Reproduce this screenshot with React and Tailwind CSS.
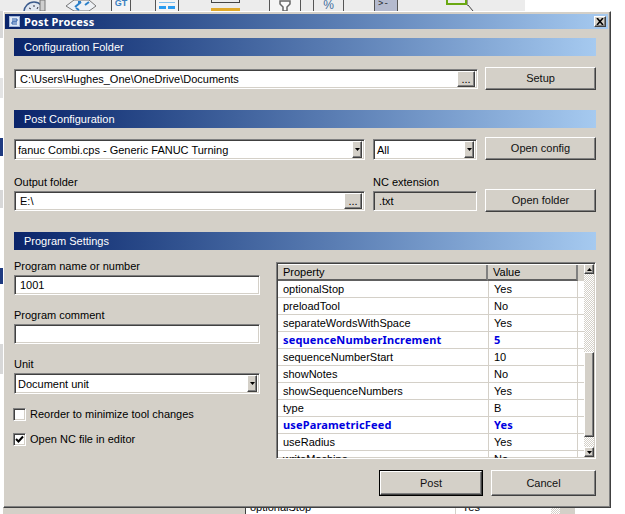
import React from "react";

const font = "font-['Liberation_Sans','Noto_Sans',sans-serif] text-[11px] leading-[14px]";
const boldFont = "font-['Noto_Sans',sans-serif] font-bold tracking-[0.15px]";

const sunken =
  "border border-t-[#808080] border-l-[#808080] border-b-white border-r-white shadow-[inset_1px_1px_0_#404040,inset_-1px_-1px_0_#d4d0c8]";
const raised =
  "border border-t-white border-l-white border-b-[#404040] border-r-[#404040] shadow-[inset_-1px_-1px_0_#808080]";
const gradient = "bg-gradient-to-r from-[#0a246a] to-[#a6caf0]";
const dither = "bg-[repeating-conic-gradient(#d4d0c8_0_25%,#ffffff_0_50%)] bg-[length:2px_2px]";

const rows = [
  ["optionalStop", "Yes"],
  ["preloadTool", "No"],
  ["separateWordsWithSpace", "Yes"],
  ["sequenceNumberIncrement", "5", true],
  ["sequenceNumberStart", "10"],
  ["showNotes", "No"],
  ["showSequenceNumbers", "Yes"],
  ["type", "B"],
  ["useParametricFeed", "Yes", true],
  ["useRadius", "Yes"],
  ["writeMachine", "No"],
];

const Arrow = ({ up }) => (
  <svg width="5" height="3" viewBox="0 0 5 3" className="block">
    <path d={up ? "M2.5 0 L5 3 L0 3 Z" : "M0 0 L5 0 L2.5 3 Z"} fill="#000" />
  </svg>
);

const Bar = ({ children, className = "" }) => (
  <div className={`h-[18px] flex items-center pl-[10px] text-white ${gradient} ${className}`}>
    {children}
  </div>
);

const Button = ({ children, className = "" }) => (
  <div className={`flex items-center justify-center bg-[#d4d0c8] pb-px text-[#111] ${raised} ${className}`}>
    {children}
  </div>
);

const Field = ({ children, className = "", bg = "bg-white" }) => (
  <div className={`flex items-center h-[20px] pl-[5px] text-black ${bg} ${sunken} ${className}`}>
    {children}
  </div>
);

const Browse = ({ children }) => (
  <Field className="justify-between pr-[2px]">
    <span>{children}</span>
    <div className={`w-[18px] h-[16px] flex items-center justify-center leading-[10px] bg-[#d4d0c8] ${raised}`}>...</div>
  </Field>
);

const Combo = ({ children, className = "" }) => (
  <div className={`flex items-center justify-between h-[21px] pl-[3px] pr-[2px] bg-white text-black ${sunken} ${className}`}>
    <span>{children}</span>
    <div className={`w-[10px] h-[17px] flex items-center justify-center bg-[#d4d0c8] ${raised}`}>
      <Arrow />
    </div>
  </div>
);

const Check = ({ checked, label, className = "" }) => (
  <div className={`flex items-center gap-[4px] -ml-px ${className}`}>
    <div className={`w-[13px] h-[13px] flex items-center justify-center bg-white ${sunken}`}>
      {checked && (
        <svg width="9" height="9" viewBox="0 0 9 9">
          <path d="M1 4 L3.5 6.5 L8 1.5" fill="none" stroke="#000" strokeWidth="2" />
        </svg>
      )}
    </div>
    <span className="text-black">{label}</span>
  </div>
);

function Toolbar() {
  return (
    <div className="flex h-[11px] w-[525px] shrink-0 overflow-hidden bg-[#ececec]">
      <svg width="26" height="11" viewBox="0 0 26 11" className="ml-[23px] shrink-0">
        <circle cx="11" cy="12" r="10" fill="#dfe6f0" stroke="#3a5a8c" strokeWidth="1.5" />
        <path d="M6 8 L8 9 M11 5 L11 7 M15 7 L14 9" stroke="#334" strokeWidth="1" />
        <rect x="17" y="0" width="5" height="11" fill="#cfcfcf" stroke="#777" />
      </svg>
      <svg width="32" height="11" viewBox="0 0 32 11" className="ml-[16px] shrink-0">
        <path d="M1 6 L9 0 L24 0 L31 6 L24 11 L9 11 Z" fill="#eef1f5" stroke="#777" />
        <path d="M10 7 L16 2 M16 2 L13 2 M20 5 L24 2 M11 8 L14 10" stroke="#2a7fc9" strokeWidth="2" fill="none" />
      </svg>
      <div className="ml-[14px] w-[20px] shrink-0 border-x border-[#555] bg-[#f4f4f4] text-center text-[9px] font-bold leading-[6px] text-[#3a7fc0]">
        GT
      </div>
      <div className="ml-[24px] w-[24px] shrink-0 border-x border-[#555] bg-[#f4f4f4] pt-[2px] pl-[3px]">
        <div className="h-px w-[16px] bg-[#7fbfee]" />
        <div className="mt-[3px] flex gap-[2px]">
          <div className="h-[3px] w-[7px] bg-[#2a9cf0]" />
          <div className="h-[3px] w-[7px] bg-[#2a9cf0]" />
        </div>
      </div>
      <div className="ml-[32px] w-[29px] shrink-0">
        <div className="h-[3px] border-x border-b border-[#444]" />
        <div className="mt-[5px] h-[3px] bg-[#e0a92a]" />
      </div>
      <div className="ml-[29px] flex w-[32px] shrink-0 justify-center border-x border-[#555] bg-[#f4f4f4]">
        <svg width="12" height="11" viewBox="0 0 12 11">
          <path d="M1 1 L11 1 L11 4 L8 7 L8 11 L4 11 L4 7 L1 4 Z" fill="#fafafa" stroke="#666" strokeWidth="1.5" />
        </svg>
      </div>
      <div className="ml-[12px] w-[31px] shrink-0 border-x border-[#555] bg-[#ececec] text-center text-[12px] leading-[11px] text-[#3f6d9c]">
        %
      </div>
      <div className="ml-[30px] w-[24px] shrink-0 border-x border-[#555] bg-[#b4bace] pl-[3px] font-['Liberation_Mono',monospace] text-[9px] leading-[9px] text-[#222]">
        &gt;-
      </div>
      <div className="ml-[48px] h-[5px] w-[21px] shrink-0 border-x-2 border-b-2 border-[#6aa812]" />
      <svg width="8" height="11" viewBox="0 0 8 11" className="shrink-0">
        <path d="M0 0 L0 6 M1 5 L6 11" stroke="#444" fill="none" />
      </svg>
    </div>
  );
}

function LeftStrip() {
  return (
    <div className="flex w-[3px] shrink-0 flex-col bg-white">
      <div className="h-[27px] bg-[#d8d8d8]" />
      <div className="h-[40px] bg-white" />
      <div className="h-[20px] bg-[#e4e4e4]" />
      <div className="h-[40px] bg-white" />
      <div className="h-[18px] bg-[#1f3a80]" />
      <div className="h-[34px] bg-white" />
      <div className="h-[18px] bg-[#d8d8d8]" />
      <div className="h-[60px] bg-white" />
      <div className="h-[16px] bg-[#1f3a80]" />
      <div className="h-[60px] bg-white" />
      <div className="h-[30px] bg-[#d8d8d8]" />
      <div className="flex-1 bg-white" />
    </div>
  );
}

function BackgroundTable() {
  return (
    <div className="flex h-[14px] text-black">
      <div className="w-[242px] shrink-0 bg-[#d4d0c8]" />
      <div className="flex w-[300px] shrink-0 border-l border-[#404040] bg-white pl-[4px]">
        <span className="w-[205px]">optionalStop</span>
        <span className="border-l border-[#d4d0c8] pl-[6px]">Yes</span>
      </div>
      <div className={`ml-[6px] w-[9px] shrink-0 ${dither}`} />
      <div className="w-[15px] shrink-0 bg-[#d4d0c8]" />
    </div>
  );
}

function PropertyTable() {
  return (
    <div className={`mt-[12px] flex h-[197px] w-[320px] overflow-hidden bg-white ${sunken}`}>
      <div className="w-[307px] shrink-0 pt-[2px] pl-px">
        <div className="flex h-[16px] text-black">
          <div className="flex w-[210px] items-center border-r-2 border-b-2 border-b-[#606060] border-r-[#808080] bg-[#d4d0c8] pl-[5px]">
            Property
          </div>
          <div className="flex w-[90px] items-center border-r-2 border-b-2 border-b-[#606060] border-r-[#808080] bg-[#d4d0c8] pl-[5px]">
            Value
          </div>
          <div className="flex-1 bg-[#d4d0c8]" />
        </div>
        {rows.map(([name, value, changed]) => (
          <div
            key={name}
            className={`flex h-[17px] shrink-0 items-center border-b border-[#d4d0c8] ${changed ? `${boldFont} text-[#0000e0]` : "text-black"}`}
          >
            <span className="w-[210px] pl-[5px]">{name}</span>
            <span className="flex h-full w-[90px] items-center border-x border-[#d4d0c8] pl-[5px]">{value}</span>
          </div>
        ))}
      </div>
      <div className={`my-px flex w-[10px] shrink-0 flex-col ${dither}`}>
        <div className={`flex h-[10px] shrink-0 items-center justify-center bg-[#d4d0c8] ${raised}`}>
          <Arrow up />
        </div>
        <div className={`mt-[78px] h-[85px] shrink-0 bg-[#d4d0c8] ${raised}`} />
        <div className={`mt-auto flex h-[10px] shrink-0 items-center justify-center bg-[#d4d0c8] ${raised}`}>
          <Arrow />
        </div>
      </div>
    </div>
  );
}

function Dialog() {
  return (
    <div className={`absolute left-[3px] top-[11px] h-[497px] w-[608px] bg-[#d4d0c8] pt-[2px] pr-[2px] pl-px ${raised}`}>
      <div className={`flex h-[15px] items-center justify-between pl-[4px] pr-[2px] ${gradient}`}>
        <div className={`flex items-center gap-[4px] text-white ${boldFont}`}>
          <svg width="11" height="11" viewBox="0 0 11 11">
            <rect x="0.5" y="0.5" width="10" height="10" fill="#dfe8f6" stroke="#9fb4d8" />
            <path d="M3 3 L8 3 L8 5 L3 5 M8 6 L3 6 L3 8 L8 8" fill="none" stroke="#2a5ca8" />
          </svg>
          Post Process
        </div>
        <div className={`flex h-[11px] w-[12px] items-center justify-center bg-[#d4d0c8] ${raised}`}>
          <svg width="8" height="7" viewBox="0 0 8 7">
            <path d="M1 0 L7 7 M7 0 L1 7" stroke="#000" strokeWidth="1.6" />
          </svg>
        </div>
      </div>

      <div className="pl-[9px] pr-[12px]">
        <Bar className="mt-[9px]">Configuration Folder</Bar>
        <div className="mt-[11px] flex items-center justify-between">
          <div className="w-[464px]">
            <Browse>C:\Users\Hughes_One\OneDrive\Documents</Browse>
          </div>
          <Button className="h-[23px] w-[111px]">Setup</Button>
        </div>

        <Bar className="mt-[20px]">Post Configuration</Bar>
        <div className="mt-[9px] grid grid-cols-[351px_104px_111px] gap-x-2">
          <Combo className="self-end">fanuc Combi.cps - Generic FANUC Turning</Combo>
          <Combo className="self-end">All</Combo>
          <Button className="h-[23px]">Open config</Button>
        </div>
        <div className="mt-[15px] grid grid-cols-[351px_104px_111px] items-end gap-x-2">
          <div className="pb-px">
            <div className="mb-[2px] text-black">Output folder</div>
            <Browse>E:\</Browse>
          </div>
          <div className="pb-px">
            <div className="mb-[2px] text-black">NC extension</div>
            <Field bg="bg-[#d4d0c8]">.txt</Field>
          </div>
          <Button className="h-[23px]">Open folder</Button>
        </div>

        <Bar className="mt-[20px]">Program Settings</Bar>
        <div className="flex justify-between">
          <div className="w-[246px] pt-[9px]">
            <div className="mb-[2px] text-black">Program name or number</div>
            <Field>1001</Field>
            <div className="mt-[13px] mb-[2px] text-black">Program comment</div>
            <Field />
            <div className="mt-[13px] mb-[2px] text-black">Unit</div>
            <Combo>Document unit</Combo>
            <Check className="mt-[13px]" label="Reorder to minimize tool changes" />
            <Check className="mt-[11px]" checked label="Open NC file in editor" />
          </div>
          <PropertyTable />
        </div>
        <div className="mt-[11px] flex justify-end gap-[8px]">
          <div className="border border-black">
            <Button className="h-[24px] w-[102px]">Post</Button>
          </div>
          <Button className="h-[26px] w-[105px]">Cancel</Button>
        </div>
      </div>
    </div>
  );
}

export default function App() {
  return (
    <div className={`relative flex h-[514px] w-[625px] flex-col overflow-hidden bg-white ${font}`}>
      <Toolbar />
      <div className="flex flex-1">
        <LeftStrip />
        <div className="flex flex-1 flex-col justify-end">
          <BackgroundTable />
        </div>
      </div>
      <Dialog />
    </div>
  );
}
